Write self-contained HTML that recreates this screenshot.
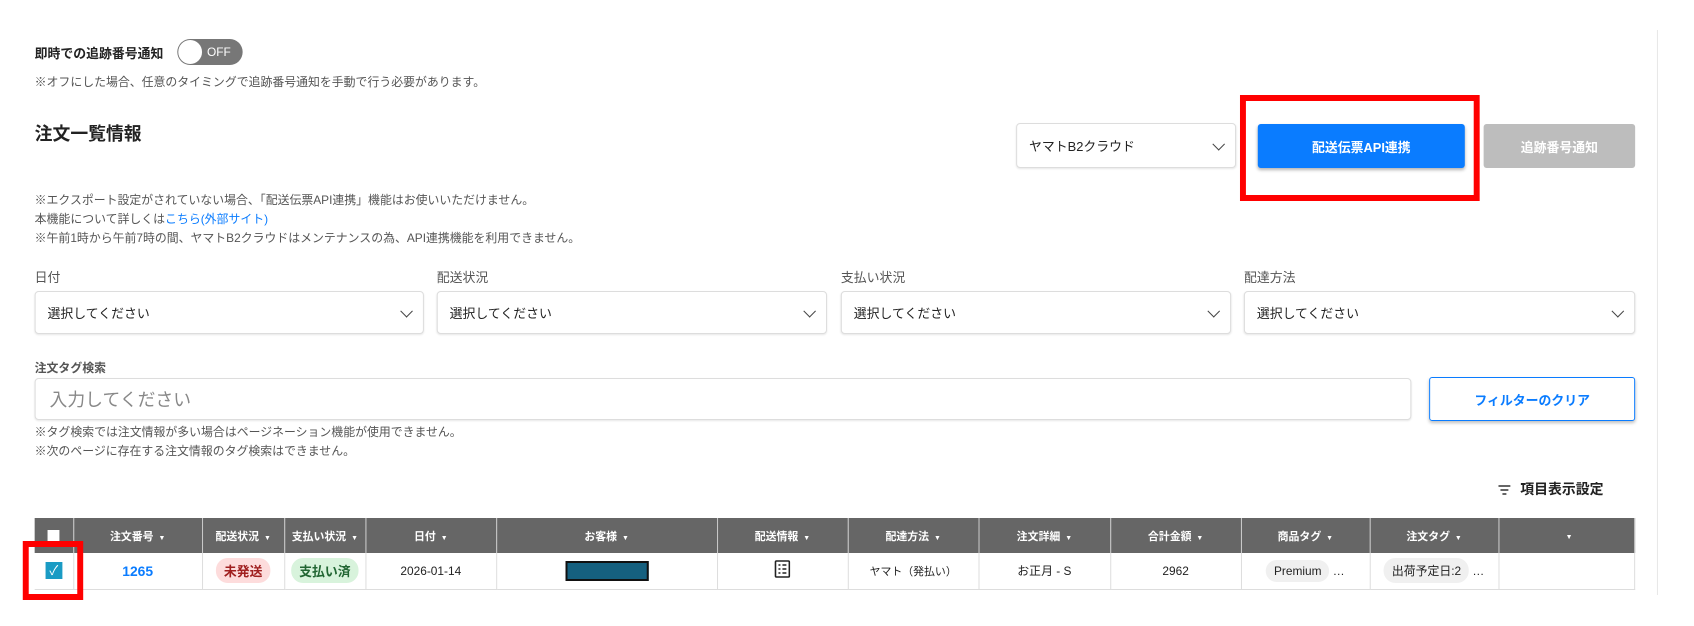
<!DOCTYPE html>
<html><head><meta charset="utf-8"><style>
*{box-sizing:border-box;margin:0;padding:0}
body{width:1694px;height:626px;background:#fff;font-family:"Liberation Sans","Noto Sans CJK JP",sans-serif;color:#333;overflow:hidden}
#w{position:relative;width:1694px;height:626px;transform:scaleX(0.9904);transform-origin:0 0}
.a{position:absolute;white-space:nowrap}
.note{font-size:12px;color:#555}
.sel{position:absolute;border:1px solid #ddd;border-radius:4px;background:#fff;box-shadow:0 1px 2px rgba(0,0,0,.1);font-size:13px;color:#222;padding-left:12px;display:flex;align-items:center}
.chev{position:absolute;right:12px;top:50%;width:9px;height:9px;border-right:1.6px solid #444;border-bottom:1.6px solid #444;transform:translateY(-70%) rotate(45deg)}
.lbl{font-size:13px;color:#555}
table{position:absolute;left:35px;top:518px;border-collapse:collapse;width:1616px;table-layout:fixed}
th{background:#666;color:#fff;font-size:11px;font-weight:bold;height:35px;border-right:1px solid #ccc;text-align:center}
th span{font-size:7px;margin-left:5px}
td{height:36px;border-right:1px solid #ddd;border-bottom:1px solid #ddd;text-align:center;font-size:12px;color:#222}
.pill{display:inline-block;padding:3px 8px;border-radius:12px;font-size:13px;font-weight:bold}
.tag{display:inline-block;padding:4px 8px;border-radius:12px;background:#f0f0f0;font-size:12px}
</style></head><body><div id="w">
<div class="a" style="left:35px;top:43px;font-size:13px;font-weight:bold;color:#222">即時での追跡番号通知</div>
<div class="a" style="left:179px;top:39px;width:66px;height:26px;border-radius:13px;background:#777;"></div>
<div class="a" style="left:180px;top:40px;width:24px;height:24px;border-radius:12px;background:#fff"></div>
<div class="a" style="left:209px;top:45px;font-size:12px;color:#fff">OFF</div>
<div class="a note" style="left:35px;top:73px">※オフにした場合、任意のタイミングで追跡番号通知を手動で行う必要があります。</div>
<div class="a" style="left:35px;top:120px;font-size:18px;font-weight:bold;color:#222">注文一覧情報</div>
<div class="sel" style="left:1026px;top:123px;width:222px;height:45px">ヤマトB2クラウド<div class="chev"></div></div>
<div class="a" style="left:1270px;top:124px;width:209px;height:44px;background:#0a7cff;border-radius:3px;box-shadow:0 2px 3px rgba(0,0,0,.3);color:#fff;font-size:13px;font-weight:bold;display:flex;align-items:center;justify-content:center">配送伝票API連携</div>
<div class="a" style="left:1498px;top:124px;width:153px;height:44px;background:#bdbdbd;border-radius:3px;color:#fff;font-size:13px;font-weight:bold;display:flex;align-items:center;justify-content:center">追跡番号通知</div>
<div class="a" style="left:1252px;top:95px;width:242px;height:106px;border:6px solid #f00"></div>
<div class="a" style="left:1673px;top:30px;width:1px;height:565px;background:#e6e6e6"></div>
<div class="a note" style="left:35px;top:191px;line-height:19px">※エクスポート設定がされていない場合、「配送伝票API連携」機能はお使いいただけません。<br>本機能について詳しくは<span style="color:#0a7cff">こちら(外部サイト)</span><br>※午前1時から午前7時の間、ヤマトB2クラウドはメンテナンスの為、API連携機能を利用できません。</div>
<div class="a lbl" style="left:35px;top:267px">日付</div>
<div class="a lbl" style="left:441px;top:267px">配送状況</div>
<div class="a lbl" style="left:849px;top:267px">支払い状況</div>
<div class="a lbl" style="left:1256px;top:267px">配達方法</div>
<div class="sel" style="left:35px;top:291px;width:393px;height:43px">選択してください<div class="chev"></div></div>
<div class="sel" style="left:441px;top:291px;width:394px;height:43px">選択してください<div class="chev"></div></div>
<div class="sel" style="left:849px;top:291px;width:394px;height:43px">選択してください<div class="chev"></div></div>
<div class="sel" style="left:1256px;top:291px;width:395px;height:43px">選択してください<div class="chev"></div></div>
<div class="a" style="left:35px;top:359px;font-size:12px;font-weight:bold;color:#555">注文タグ検索</div>
<div class="sel" style="left:35px;top:378px;width:1390px;height:42px;font-size:18px;color:#888;padding-left:14px">入力してください</div>
<div class="a" style="left:1443px;top:377px;width:208px;height:44px;border:1.5px solid #0a7cff;border-radius:3px;box-shadow:0 2px 3px rgba(0,0,0,.25);color:#0a7cff;font-size:13px;font-weight:bold;display:flex;align-items:center;justify-content:center">フィルターのクリア</div>
<div class="a note" style="left:35px;top:423px;line-height:19px">※タグ検索では注文情報が多い場合はページネーション機能が使用できません。<br>※次のページに存在する注文情報のタグ検索はできません。</div>
<svg class="a" style="left:1512px;top:484px" width="14" height="12"><path d="M1 2h12M3 6h8M5 10h4" stroke="#333" stroke-width="1.6"/></svg>
<div class="a" style="left:1535px;top:479px;font-size:14px;font-weight:bold;color:#222">項目表示設定</div>
<table>
<colgroup><col style="width:39px"><col style="width:130px"><col style="width:83px"><col style="width:82px"><col style="width:132px"><col style="width:223px"><col style="width:132px"><col style="width:132px"><col style="width:133px"><col style="width:132px"><col style="width:130px"><col style="width:130px"><col></colgroup>
<tr><th><div style="width:12px;height:12px;background:#fff;margin:auto"></div></th><th>注文番号<span>▼</span></th><th>配送状況<span>▼</span></th><th>支払い状況<span>▼</span></th><th>日付<span>▼</span></th><th>お客様<span>▼</span></th><th>配送情報<span>▼</span></th><th>配達方法<span>▼</span></th><th>注文詳細<span>▼</span></th><th>合計金額<span>▼</span></th><th>商品タグ<span>▼</span></th><th>注文タグ<span>▼</span></th><th><span>▼</span></th></tr>
<tr><td><div style="width:17px;height:17px;background:#1a9bc4;margin:auto;color:#fff;font-size:13px;line-height:17px">✓</div></td><td style="color:#0a7cff;font-weight:bold;font-size:14px">1265</td><td><span class="pill" style="background:#fddcdc;color:#a02020">未発送</span></td><td><span class="pill" style="background:#d8f3dc;color:#226633">支払い済</span></td><td>2026-01-14</td><td><div style="width:84px;height:20px;background:#15607f;border:2px solid #111;margin:auto"></div></td><td><svg width="16" height="18" viewBox="0 0 16 18"><rect x="1" y="1" width="14" height="16" rx="1" fill="none" stroke="#222" stroke-width="1.6"/><path d="M4 5h2M8 5h4M4 9h2M8 9h4M4 13h2M8 13h4" stroke="#222" stroke-width="1.5"/></svg></td><td style="font-size:11px">ヤマト（発払い）</td><td>お正月 - S</td><td>2962</td><td><span class="tag">Premium</span> …</td><td><span class="tag">出荷予定日:2</span> …</td><td></td></tr>
</table>
<div class="a" style="left:35px;top:591px;width:1616px;height:4px;background:#fff"></div>
<div class="a" style="left:23px;top:541px;width:61px;height:59px;border:6px solid #f00"></div>
</div></body></html>
